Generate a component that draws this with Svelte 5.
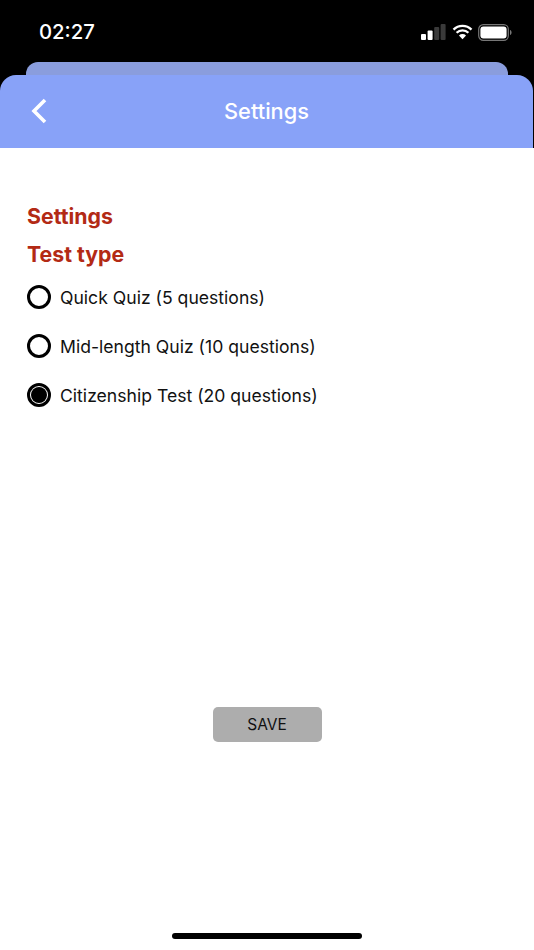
<script>
  const options = [
    { label: 'Quick Quiz (5 questions)', checked: false },
    { label: 'Mid-length Quiz (10 questions)', checked: false },
    { label: 'Citizenship Test (20 questions)', checked: true }
  ];
</script>

<div class="screen">
  <div class="top">
    <div class="status">
      <span class="time">02:27</span>
      <div class="status-icons">
        <svg class="signal" width="25" height="16" viewBox="0 0 25 16">
          <rect x="0" y="10" width="5" height="6" rx="1" fill="#fff" />
          <rect x="6.6" y="6.5" width="5" height="9.5" rx="1" fill="#fff" />
          <rect x="13.2" y="3" width="5" height="13" rx="1" fill="#3a3a3a" />
          <rect x="19.6" y="0" width="5" height="16" rx="1" fill="#3a3a3a" />
        </svg>
        <svg width="21" height="16" viewBox="0 0 21 16">
          <path d="M1.5 5.6a12.8 12.8 0 0 1 18 0M4.6 8.8a8.4 8.4 0 0 1 11.8 0" fill="none" stroke="#fff" stroke-width="2.3" />
          <path d="M7 11.4a4.9 4.9 0 0 1 7 0l-3.5 3.8z" fill="#fff" />
        </svg>
        <svg width="34" height="17" viewBox="0 0 34 17">
          <rect x="0.7" y="0.7" width="29.6" height="15.6" rx="4.6" fill="none" stroke="#777" stroke-width="1.2" />
          <rect x="2.4" y="2.4" width="26.2" height="12.2" rx="3" fill="#fff" />
          <path d="M32 6v5c1-.3 1.6-1.3 1.6-2.500S33 6.300 32 6z" fill="#777" />
        </svg>
      </div>
    </div>
    <div class="card-behind"></div>
    <header class="nav">
      <button class="back" aria-label="Back">
        <svg width="18" height="26" viewBox="0 0 18 26">
          <path d="M15 2 4 13l11 11" fill="none" stroke="#fff" stroke-width="3.600" />
        </svg>
      </button>
      <h1>Settings</h1>
    </header>
  </div>

  <main>
    <h2>Settings</h2>
    <h2 class="sub">Test type</h2>
    <div class="options">
      {#each options as opt}
        <div class="option">
          <span class="radio" class:checked={opt.checked}></span>
          <span>{opt.label}</span>
        </div>
      {/each}
    </div>
    <button class="save">SAVE</button>
  </main>

  <div class="home-bar"></div>
</div>

<style>
  :global(body) {
    margin: 0;
    background: #fff;
  }
  .screen {
    width: 534px;
    height: 950px;
    display: flex;
    flex-direction: column;
    overflow: hidden;
    font-family: Inter, "Liberation Sans", sans-serif;
    background: #fff;
  }
  .top {
    background: #000;
  }
  .status {
    height: 62px;
    display: flex;
    justify-content: space-between;
    align-items: flex-start;
    padding: 20px 22px 0 39px;
    box-sizing: border-box;
  }
  .time {
    color: #fff;
    font-size: 20.300px;
    font-weight: 500;
    line-height: 24px;
  }
  .status-icons {
    display: flex;
    align-items: center;
    gap: 5px;
    height: 24px;
  }
  .signal {
    margin-right: 1px;
  }
  .card-behind {
    height: 13px;
    margin: 0 26px;
    background: #8a9ddd;
    border-radius: 12px 12px 0 0;
  }
  .nav {
    height: 73px;
    width: 533px;
    padding-bottom: 2px;
    box-sizing: border-box;
    background: #88a2f8;
    border-radius: 16px 16px 0 0;
    display: flex;
    align-items: center;
    justify-content: center;
    position: relative;
  }
  .nav h1 {
    margin: 0;
    color: #fff;
    font-size: 21.800px;
    font-weight: 500;
  }
  .back {
    position: absolute;
    left: 30px;
    top: 23px;
    padding: 0;
    border: 0;
    background: none;
    display: flex;
  }
  main {
    flex: 1;
    padding: 53px 27px 0;
    display: flex;
    flex-direction: column;
  }
  h2 {
    margin: 0;
    color: #b32a15;
    font-size: 21.300px;
    font-weight: 700;
    line-height: 30px;
  }
  .sub {
    margin-top: 8px;
  }
  .options {
    margin-top: 15px;
    display: flex;
    flex-direction: column;
    gap: 23px;
  }
  .option {
    height: 26px;
    display: flex;
    align-items: center;
    gap: 9px;
    font-size: 17.600px;
    color: #111;
  }
  .radio {
    width: 24px;
    height: 24px;
    box-sizing: border-box;
    border: 3px solid #000;
    border-radius: 50%;
    display: flex;
    align-items: center;
    justify-content: center;
  }
  .radio.checked::after {
    content: "";
    width: 16px;
    height: 16px;
    border-radius: 50%;
    background: #000;
  }
  .save {
    align-self: center;
    margin-top: 299px;
    width: 109px;
    height: 35px;
    border: 0;
    border-radius: 5px;
    background: #adadad;
    color: #111;
    font-family: inherit;
    font-size: 15.500px;
  }
  .home-bar {
    width: 190px;
    height: 6px;
    margin: 0 auto 11px;
    border-radius: 3px;
    background: #000;
  }
</style>
